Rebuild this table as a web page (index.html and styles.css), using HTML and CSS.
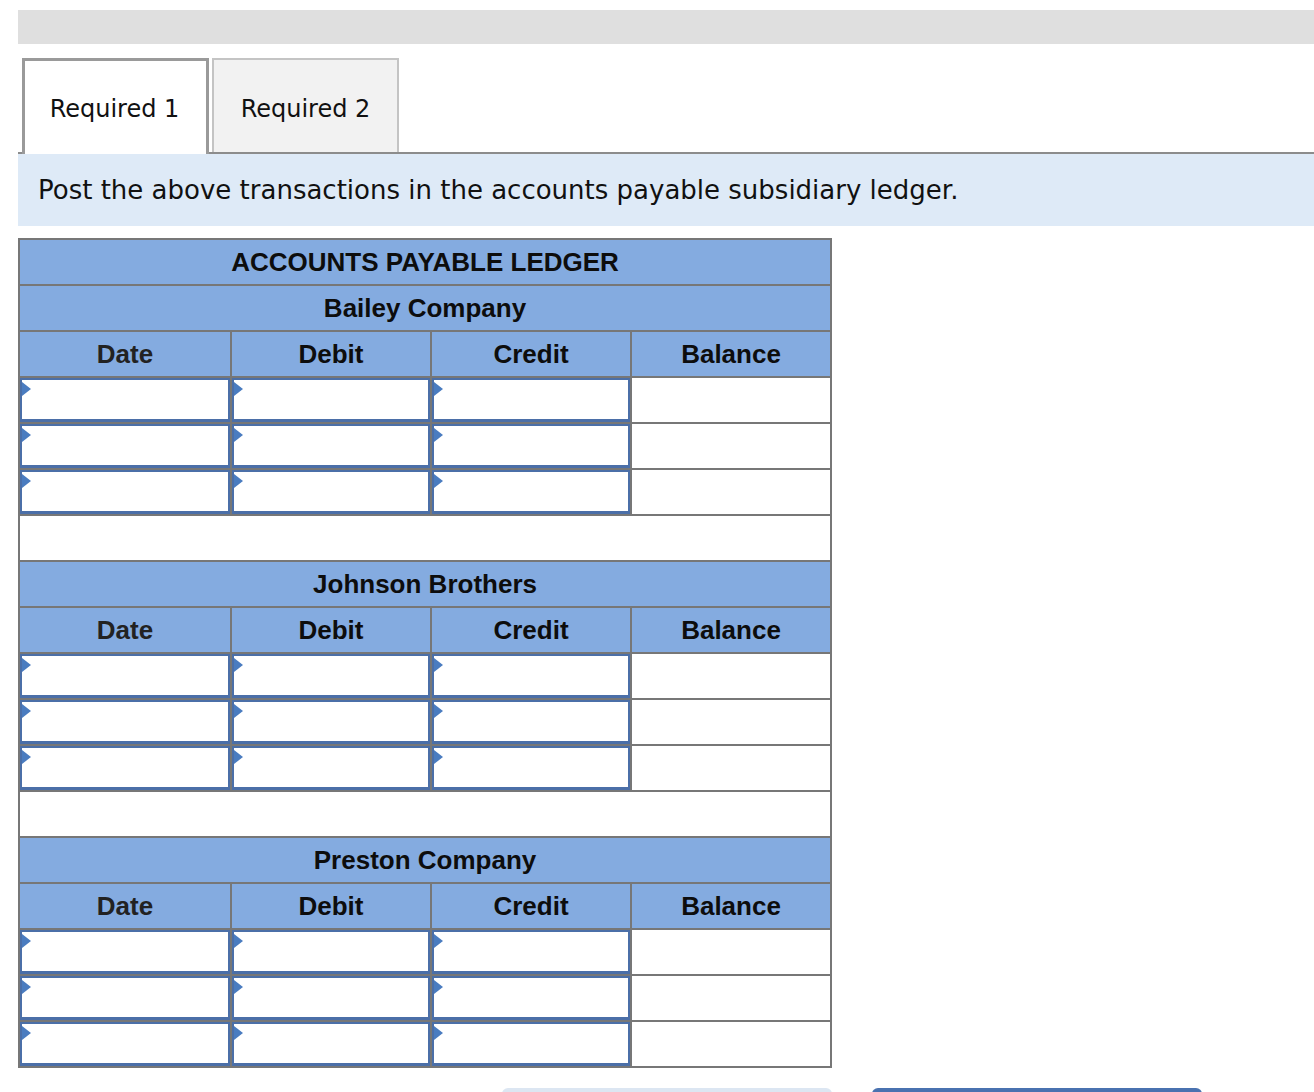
FILE: index.html
```html
<!DOCTYPE html>
<html>
<head>
<meta charset="utf-8">
<link rel="stylesheet" href="styles.css">
</head>
<body>
<div class="page">
  <div class="topbar"></div>
  <div class="tabs">
    <div class="tab tab-active">Required 1</div>
    <div class="tab tab-inactive">Required 2</div>
  </div>
  <div class="instructions">Post the above transactions in the accounts payable subsidiary ledger.</div>
  <table class="ledger">
    <colgroup>
      <col class="c-date"><col class="c-amt"><col class="c-amt"><col class="c-amt">
    </colgroup>
    <tbody>
      <tr class="hrow"><th colspan="4">ACCOUNTS PAYABLE LEDGER</th></tr>
      <tr class="hrow"><th colspan="4">Bailey Company</th></tr>
      <tr class="hrow"><th class="date">Date</th><th>Debit</th><th>Credit</th><th>Balance</th></tr>
      <tr class="drow"><td><div class="inp"></div></td><td><div class="inp"></div></td><td><div class="inp"></div></td><td></td></tr>
      <tr class="drow"><td><div class="inp"></div></td><td><div class="inp"></div></td><td><div class="inp"></div></td><td></td></tr>
      <tr class="drow"><td><div class="inp"></div></td><td><div class="inp"></div></td><td><div class="inp"></div></td><td></td></tr>
      <tr class="erow"><td colspan="4"></td></tr>
      <tr class="hrow"><th colspan="4">Johnson Brothers</th></tr>
      <tr class="hrow"><th class="date">Date</th><th>Debit</th><th>Credit</th><th>Balance</th></tr>
      <tr class="drow"><td><div class="inp"></div></td><td><div class="inp"></div></td><td><div class="inp"></div></td><td></td></tr>
      <tr class="drow"><td><div class="inp"></div></td><td><div class="inp"></div></td><td><div class="inp"></div></td><td></td></tr>
      <tr class="drow"><td><div class="inp"></div></td><td><div class="inp"></div></td><td><div class="inp"></div></td><td></td></tr>
      <tr class="erow"><td colspan="4"></td></tr>
      <tr class="hrow"><th colspan="4">Preston Company</th></tr>
      <tr class="hrow"><th class="date">Date</th><th>Debit</th><th>Credit</th><th>Balance</th></tr>
      <tr class="drow"><td><div class="inp"></div></td><td><div class="inp"></div></td><td><div class="inp"></div></td><td></td></tr>
      <tr class="drow"><td><div class="inp"></div></td><td><div class="inp"></div></td><td><div class="inp"></div></td><td></td></tr>
      <tr class="drow"><td><div class="inp"></div></td><td><div class="inp"></div></td><td><div class="inp"></div></td><td></td></tr>
    </tbody>
  </table>
  <div class="buttons">
    <div class="btn btn-prev"></div>
    <div class="btn btn-next"></div>
  </div>
</div>
</body>
</html>
```

FILE: styles.css
```css
html, body {
  margin: 0;
  padding: 0;
  background: #ffffff;
  overflow: hidden;
}

.page {
  padding: 10px 0 0 18px;
  height: 1082px;
  overflow: hidden;
}

.topbar {
  height: 34px;
  background: #dfdfdf;
}

.tabs {
  display: flex;
  align-items: flex-start;
  gap: 3px;
  margin-top: 14px;
  padding-left: 4px;
  border-bottom: 2px solid #8c8c8c;
  height: 96px;
  box-sizing: border-box;
}

.tab {
  width: 187px;
  box-sizing: border-box;
  text-align: center;
  font-family: "DejaVu Sans", Verdana, sans-serif;
  font-size: 24px;
  line-height: 28px;
  color: #111;
}

.tab-active {
  background: #ffffff;
  border: 3px solid #9a9a9a;
  border-bottom: none;
  height: 96px;
  padding-top: 34px;
  padding-right: 2px;
  position: relative;
  z-index: 1;
}

.tab-inactive {
  background: #f2f2f2;
  border: 2px solid #c4c4c4;
  border-bottom: none;
  height: 94px;
  padding-top: 35px;
}

.instructions {
  background: #deeaf7;
  height: 72px;
  box-sizing: border-box;
  padding: 20px 0 0 20px;
  font-family: "DejaVu Sans", Verdana, sans-serif;
  font-size: 26px;
  line-height: 32px;
  color: #111;
}

.ledger {
  margin-top: 12px;
  border-collapse: collapse;
  width: 813px;
  table-layout: fixed;
  border: 2px solid #777;
  font-family: "Liberation Sans", Arial, sans-serif;
}

.c-date { width: 212px; }
.c-amt { width: 200px; }

.ledger th {
  background: #84abe0;
  border: 2px solid #777;
  height: 44px;
  padding: 0;
  font-size: 26px;
  font-weight: bold;
  color: #0d0d0d;
  text-align: center;
  vertical-align: middle;
}

.ledger th.date {
  color: #222;
}

.ledger td {
  border: 2px solid #777;
  height: 44px;
  padding: 0;
  background: #fff;
}

.inp {
  height: 44px;
  box-sizing: border-box;
  border: 2px solid #4b6fa8;
  border-bottom-width: 3px;
  position: relative;
  background: #fff;
}

.inp::before {
  content: "";
  position: absolute;
  left: 0;
  top: 2px;
  width: 0;
  height: 0;
  border-top: 7px solid transparent;
  border-bottom: 7px solid transparent;
  border-left: 9px solid #4a7cc0;
}

.buttons {
  display: flex;
  gap: 40px;
  margin-top: 20px;
  padding-left: 484px;
}

.btn {
  width: 330px;
  height: 40px;
  border-radius: 6px 6px 0 0;
}

.btn-prev { background: #dce6f2; }
.btn-next { background: #4a72b0; }
```
